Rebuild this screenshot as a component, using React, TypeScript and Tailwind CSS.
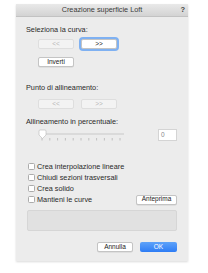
import React from "react";

const font = { fontFamily: '"Liberation Sans", Arial, sans-serif' };

function Btn({ children, w, disabled, focused }: { children: React.ReactNode; w: string; disabled?: boolean; focused?: boolean }) {
  return (
    <div
      className={
        "h-[10px] flex items-center justify-center rounded-[2px] text-[6.5px] leading-none " +
        w +
        (disabled
          ? " bg-[#f3f3f3] border border-[#dedede] text-[#b8b8b8]"
          : " bg-white border border-[#c4c4c4] text-[#222] shadow-[0_0.5px_0.5px_rgba(0,0,0,0.12)]") +
        (focused ? " ring-2 ring-[#7fb1f2] border-[#9cc2f2]" : "")
      }
    >
      {children}
    </div>
  );
}

function Check({ label }: { label: string }) {
  return (
    <div className="h-[11px] flex items-center gap-[2px]">
      <div className="w-[7px] h-[7px] rounded-[1.5px] bg-white border border-[#ababab]" />
      <span className="text-[7.3px] leading-none text-[#2a2a2a]">{label}</span>
    </div>
  );
}

export default function App() {
  const ticks = Array.from({ length: 11 }, (_, i) => 42 + i * 7.8);
  return (
    <div className="w-[208px] h-[273px] bg-white pt-[4px] pl-[16px]" style={font}>
      <div className="w-[172px] bg-[#ececec] shadow-[0_1px_2px_rgba(0,0,0,0.15)] flex flex-col">
        <div className="h-[13px] bg-gradient-to-b from-[#e9e9e9] to-[#d3d3d3] border-b border-[#c2c2c2] flex items-center relative">
          <div className="flex-1 text-center text-[7.3px] leading-none text-[#3a3a3a]">Creazione superficie Loft</div>
          <span className="absolute right-[3px] top-[2px] text-[7.5px] font-bold leading-none text-[#444]">?</span>
        </div>
        <div className="flex flex-col pl-[10px] pr-[11px] pt-[8px] pb-[9px]">
          <div className="text-[7.3px] leading-[9px] text-[#2a2a2a]">Seleziona la curva:</div>
          <div className="flex gap-[7px] ml-[12px] mt-[5px]">
            <Btn w="w-[36px]" disabled>&lt;&lt;</Btn>
            <Btn w="w-[36px]" focused>&gt;&gt;</Btn>
          </div>
          <div className="ml-[12px] mt-[8px]">
            <Btn w="w-[36px]">Inverti</Btn>
          </div>
          <div className="text-[7.3px] leading-[9px] text-[#2a2a2a] mt-[16px]">Punto di allineamento:</div>
          <div className="flex gap-[7px] ml-[12px] mt-[7px]">
            <Btn w="w-[36px]" disabled>&lt;&lt;</Btn>
            <Btn w="w-[36px]" disabled>&gt;&gt;</Btn>
          </div>
          <div className="text-[7.3px] leading-[9px] text-[#2a2a2a] mt-[8px]">Allineamento in percentuale:</div>
          <div className="flex items-start mt-[3px] h-[12px]">
            <svg width="120" height="12" viewBox="26 129 120 12" className="block">
              <line x1="42" y1="134" x2="124" y2="134" stroke="#c8c8c8" strokeWidth="1.2" />
              {ticks.map((x) => (
                <line key={x} x1={x} y1="138" x2={x} y2="140.5" stroke="#b5b5b5" strokeWidth="0.8" />
              ))}
              <path d="M39 131 Q39 130 40 130 L45 130 Q46 130 46 131 L46 135 L42.5 138.5 L39 135 Z" fill="#fff" stroke="#b8b8b8" strokeWidth="0.6" />
            </svg>
            <div className="ml-auto w-[19px] h-[12px] bg-white border border-[#d4d4d4] flex items-center pl-[2px] text-[6.5px] text-[#888] leading-none">0</div>
          </div>
          <div className="flex flex-col ml-[2px] mt-[20px]">
            <Check label="Crea interpolazione lineare" />
            <Check label="Chiudi sezioni trasversali" />
            <Check label="Crea solido" />
            <div className="flex items-center justify-between">
              <Check label="Mantieni le curve" />
              <Btn w="w-[41px]">Anteprima</Btn>
            </div>
          </div>
          <div className="ml-[1px] mt-[5px] h-[21px] bg-[#e1e1e1] border border-[#d6d6d6] rounded-[2px]" />
          <div className="flex justify-end gap-[7px] mt-[11px]">
            <Btn w="w-[36px]">Annulla</Btn>
            <div className="w-[37px] h-[10px] rounded-[2px] bg-gradient-to-b from-[#5ea2f9] to-[#2d7cf5] flex items-center justify-center text-[6.5px] leading-none text-white">OK</div>
          </div>
        </div>
      </div>
    </div>
  );
}
